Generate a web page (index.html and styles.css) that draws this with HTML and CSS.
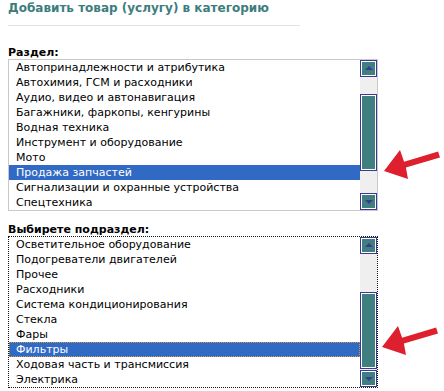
FILE: index.html
```html
<!DOCTYPE html>
<html lang="ru">
<head>
<meta charset="utf-8">
<title>Добавить товар</title>
<link rel="stylesheet" href="styles.css">
</head>
<body>
<div class="page">
  <h1 class="title">Добавить товар (услугу) в категорию</h1>
  <div class="rule"></div>

  <div class="label label-first">Раздел:</div>
  <div class="listbox">
    <ul class="items">
      <li>Автопринадлежности и атрибутика</li>
      <li>Автохимия, ГСМ и расходники</li>
      <li>Аудио, видео и автонавигация</li>
      <li>Багажники, фаркопы, кенгурины</li>
      <li>Водная техника</li>
      <li>Инструмент и оборудование</li>
      <li>Мото</li>
      <li class="sel">Продажа запчастей</li>
      <li>Сигнализации и охранные устройства</li>
      <li>Спецтехника</li>
    </ul>
    <div class="sb">
      <div class="btn"><span class="tri-up"></span></div>
      <div class="thumb thumb-a"></div>
      <div class="fill"></div>
      <div class="btn"><span class="tri-down"></span></div>
    </div>
  </div>

  <div class="label label-second">Выбирете подраздел:</div>
  <div class="listbox focused">
    <ul class="items">
      <li>Осветительное оборудование</li>
      <li>Подогреватели двигателей</li>
      <li>Прочее</li>
      <li>Расходники</li>
      <li>Система кондиционирования</li>
      <li>Стекла</li>
      <li>Фары</li>
      <li class="sel focus">Фильтры</li>
      <li>Ходовая часть и трансмиссия</li>
      <li>Электрика</li>
    </ul>
    <div class="sb">
      <div class="btn"><span class="tri-up"></span></div>
      <div class="thumb thumb-b"></div>
      <div class="fill"></div>
      <div class="btn"><span class="tri-down"></span></div>
    </div>
  </div>
</div>

<svg class="arrows" width="444" height="391" viewBox="0 0 444 391" xmlns="http://www.w3.org/2000/svg">
  <g fill="#dd1f2e">
    <polygon points="384,171 400,150 404.1,161.8 438.1,151.4 440,157.4 405.9,167.6 408,179"/>
    <polygon transform="translate(-2,176)" points="384,171 400,150 404.1,161.8 438.1,151.4 440,157.4 405.9,167.6 408,179"/>
  </g>
</svg>
</body>
</html>
```

FILE: styles.css
```css
html, body {
  margin: 0;
  padding: 0;
  background: #ffffff;
}

body {
  font-family: "DejaVu Sans", Verdana, sans-serif;
  color: #000;
  position: relative;
  width: 444px;
  height: 391px;
  overflow: hidden;
}

.page {
  padding: 0 8px;
}

.title {
  margin: 0;
  padding-top: 1px;
  font-size: 12px;
  line-height: 15px;
  font-weight: bold;
  color: #3c7d7d;
}

.rule {
  margin-top: 9px;
  width: 292px;
  height: 1px;
  background: #e2e2e2;
}

.label {
  font-size: 11px;
  line-height: 12px;
  font-weight: bold;
}

.label-first {
  margin-top: 21px;
}

.label-second {
  margin-top: 13px;
}

.listbox {
  display: flex;
  width: 368px;
  height: 150px;
  border: 1px solid #c9c9c9;
}

.listbox.focused {
  border: 1px dotted #111;
}

.items {
  flex: 1;
  margin: 0;
  padding: 0;
  list-style: none;
  overflow: hidden;
}

.items li {
  height: 15px;
  line-height: 15px;
  padding-left: 7px;
  font-size: 11px;
  white-space: nowrap;
  overflow: hidden;
}

.items li.sel {
  background: #316ac5;
  color: #fff;
}

.items li.focus {
  outline: 1px dotted #d19a3a;
  outline-offset: -1px;
}

.sb {
  width: 17px;
  display: flex;
  flex-direction: column;
  background: #efefef;
}

.btn,
.thumb {
  box-sizing: border-box;
  border: 1px solid #3a3a96;
  box-shadow: inset 0 0 0 1px #ffffff;
  background: #3f7f7f;
}

.btn {
  height: 17px;
  flex: none;
  display: flex;
  align-items: center;
  justify-content: center;
}

.thumb {
  height: 77px;
  flex: none;
}

.thumb-a {
  margin-top: 17px;
}

.thumb-b {
  margin-top: 38px;
}

.fill {
  flex: 1;
}

.tri-up,
.tri-down {
  width: 0;
  height: 0;
  border-left: 4px solid transparent;
  border-right: 4px solid transparent;
}

.tri-up {
  border-bottom: 4px solid #3a3a96;
  margin-top: -1px;
}

.tri-down {
  border-top: 4px solid #3a3a96;
  margin-top: 1px;
}

.arrows {
  position: absolute;
  left: 0;
  top: 0;
  pointer-events: none;
}
```
